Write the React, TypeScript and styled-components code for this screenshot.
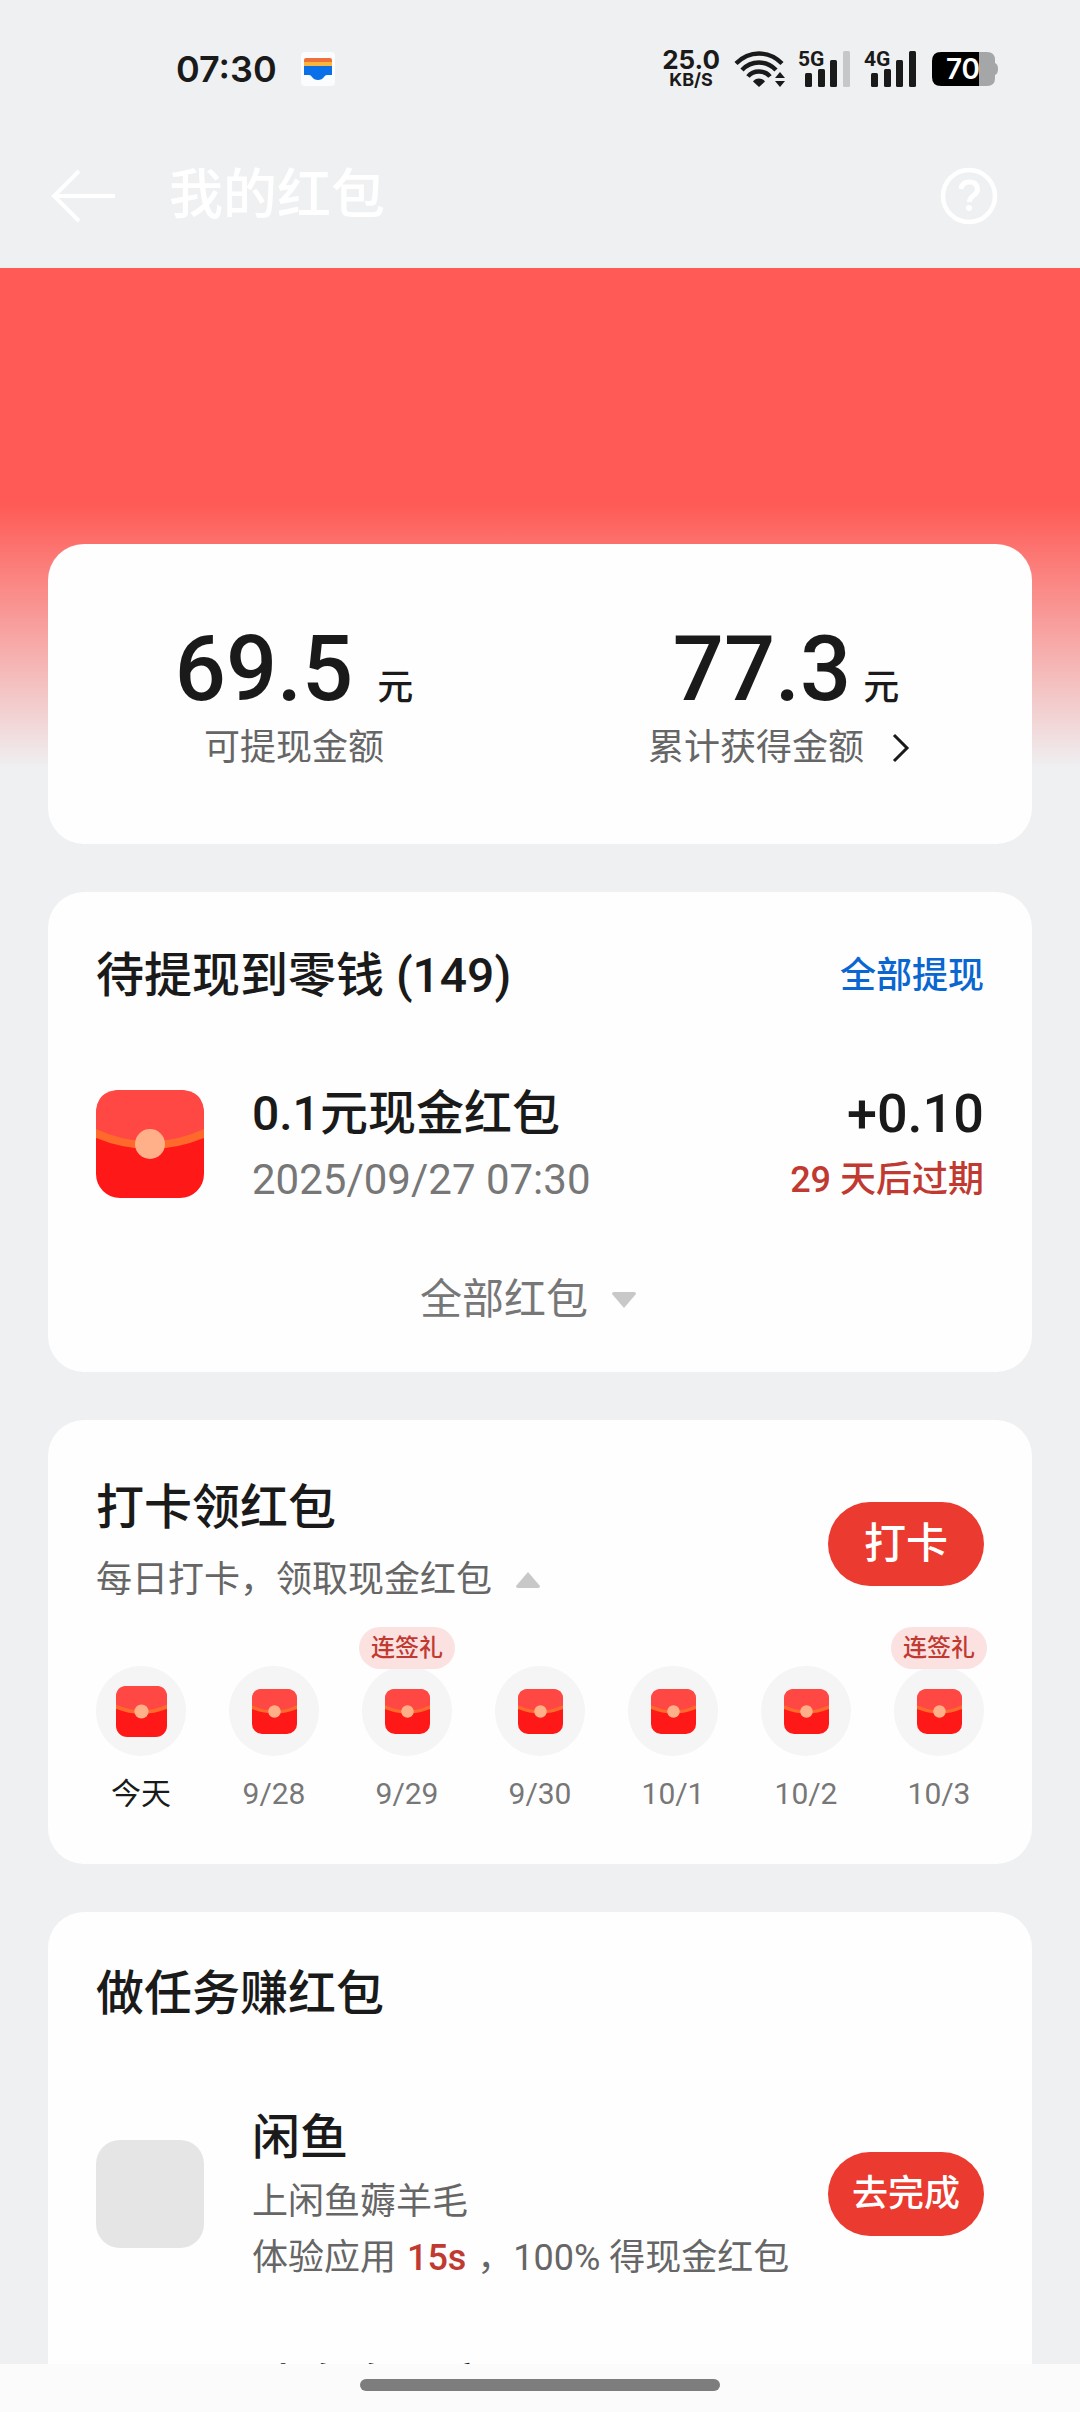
import React from "react";
import styled, { createGlobalStyle, css } from "styled-components";

const sans = `Roboto, "Noto Sans CJK SC", sans-serif`;
const ink = "#1a1a1a";
const muted = "#666666";
const soft = "#777777";
const brand = "#eb3a2f";
const alert = "#c03a31";

const GlobalStyle = createGlobalStyle`
  *, *::before, *::after { box-sizing: border-box; }
  html, body { margin: 0; height: 100%; }
  #root { height: 100%; }
  body {
    background: #eff0f2;
    color: ${ink};
    font-family: ${sans};
    overflow: hidden;
  }
  h1, h2, h3, p, ul { margin: 0; padding: 0; }
  ul { list-style: none; }
  button { border: 0; padding: 0; background: none; font-family: inherit; color: inherit; cursor: pointer; }
  svg { display: block; flex: none; overflow: visible; }
`;

const Screen = styled.div`
  display: flex;
  flex-direction: column;
  height: 100vh;
  overflow: hidden;
`;

const StatusBar = styled.div`
  display: flex;
  align-items: center;
  justify-content: space-between;
  flex: none;
  height: 124px;
  padding: 14px 82px 0 176px;
`;

const StatusGroup = styled.div<{ $gap: number }>`
  display: flex;
  align-items: center;
  gap: ${(p) => p.$gap}px;
`;

const Clock = styled.time`
  font: 600 36px/40px Inter, ${sans};
`;

const NetSpeed = styled.div`
  display: flex;
  flex-direction: column;
  align-items: center;
  font-family: Inter, ${sans};
  font-weight: 700;
`;

const SpeedValue = styled.span`
  font-size: 26px;
  line-height: 22px;
`;

const SpeedUnit = styled.span`
  font-size: 18px;
  line-height: 18px;
`;

const AppBar = styled.header`
  display: flex;
  align-items: center;
  flex: none;
  height: 144px;
  padding: 0 81px 0 48px;
  color: #ffffff;
`;

const IconButton = styled.button`
  display: flex;
  align-items: center;
  justify-content: center;
`;

const PageTitle = styled.h1`
  flex: 1;
  padding-left: 46px;
  font-size: 54px;
  line-height: 72px;
  font-weight: 500;
`;

const Content = styled.main`
  display: flex;
  flex-direction: column;
  flex: 1;
  gap: 48px;
  min-height: 0;
  overflow: hidden;
  padding: 276px 48px 0;
  background: linear-gradient(#ff5a55 0, #ff5a55 236px, #eff0f2 500px);
`;

const Card = styled.section`
  flex: none;
  border-radius: 36px;
  background: #fefefe;
`;

const BalanceCard = styled(Card)`
  display: grid;
  grid-template-columns: 1fr 1fr;
  padding: 72px 0;
`;

const PendingCard = styled(Card)`
  padding: 48px 48px 42px;
`;

const CheckInCard = styled(Card)`
  padding: 52px 48px 46px;
`;

const TaskCard = styled(Card)`
  padding: 46px 48px;
`;

const Balance = styled.div`
  display: flex;
  flex-direction: column;
  align-items: center;
`;

const Amount = styled.p<{ $gap: number }>`
  display: flex;
  align-items: baseline;
  gap: ${(p) => p.$gap}px;
  font-size: 90px;
  line-height: 108px;
  font-weight: 500;
`;

const Unit = styled.span`
  font-size: 36px;
  line-height: 48px;
`;

const labelText = css`
  font-size: 36px;
  line-height: 48px;
  color: ${muted};
`;

const BalanceLabel = styled.p`
  ${labelText}
`;

const BalanceLink = styled.button`
  display: flex;
  align-items: center;
  gap: 12px;
  ${labelText}
`;

const CardHeader = styled.div`
  display: flex;
  align-items: center;
  justify-content: space-between;
`;

const CardTitle = styled.h2`
  font-size: 48px;
  line-height: 72px;
  font-weight: 500;
`;

const TextButton = styled.button`
  font-size: 36px;
  line-height: 48px;
  font-weight: 500;
  color: #0a66d0;
`;

const Row = styled.div<{ $top: number }>`
  display: flex;
  align-items: center;
  gap: 48px;
  padding-top: ${(p) => p.$top}px;
`;

const RowText = styled.div<{ $end?: boolean }>`
  display: flex;
  flex-direction: column;
  flex: ${(p) => (p.$end ? "none" : "1")};
  align-items: ${(p) => (p.$end ? "flex-end" : "flex-start")};
  min-width: 0;
  white-space: nowrap;
`;

const TaskText = styled(RowText)`
  min-height: 184px;
`;

const RowTitle = styled.h3`
  font-size: 48px;
  line-height: 72px;
  font-weight: 500;
`;

const RowDate = styled.p`
  font-size: 42px;
  line-height: 60px;
  color: ${soft};
`;

const Gain = styled.p`
  font-size: 54px;
  line-height: 72px;
  font-weight: 500;
`;

const Expiry = styled.p`
  font-size: 36px;
  line-height: 60px;
  font-weight: 500;
  color: ${alert};
`;

const ExpandButton = styled.button`
  display: flex;
  align-items: center;
  gap: 24px;
  margin: 60px auto 0;
  padding-right: 24px;
  font-size: 42px;
  line-height: 60px;
  color: ${soft};
`;

const FoldButton = styled.button`
  display: flex;
  align-items: center;
  gap: 24px;
  ${labelText}
  line-height: 72px;
`;

const PillButton = styled.button<{ $size: number }>`
  flex: none;
  width: 156px;
  height: 84px;
  border-radius: 42px;
  background: ${brand};
  color: #ffffff;
  font-size: ${(p) => p.$size}px;
  line-height: 60px;
  font-weight: 500;
`;

const Days = styled.ul`
  display: flex;
  justify-content: space-between;
  padding-top: 50px;
`;

const Day = styled.li`
  position: relative;
  display: flex;
  flex-direction: column;
  align-items: center;
  gap: 14px;
  width: 90px;
`;

const DayDisc = styled.div`
  display: flex;
  align-items: center;
  justify-content: center;
  width: 90px;
  height: 90px;
  border-radius: 50%;
  background: #f5f5f5;
`;

const DayLabel = styled.span<{ $today: boolean }>`
  font-size: 30px;
  line-height: 48px;
  white-space: nowrap;
  color: ${(p) => (p.$today ? ink : soft)};
`;

const Bonus = styled.span`
  position: absolute;
  top: -39px;
  left: -3px;
  width: 96px;
  height: 42px;
  border-radius: 21px;
  background: #fce1e1;
  color: ${alert};
  font-size: 24px;
  line-height: 42px;
  font-weight: 500;
  text-align: center;
`;

const TaskIcon = styled.div`
  flex: none;
  width: 108px;
  height: 108px;
  border-radius: 24px;
  background: #e5e5e5;
`;

const TaskNote = styled.p`
  font-size: 36px;
  line-height: 56px;
  color: ${muted};
`;

const Seconds = styled.em`
  margin: 0 2px;
  font-style: normal;
  font-weight: 500;
  color: ${alert};
`;

const HomeBar = styled.footer`
  display: flex;
  justify-content: center;
  flex: none;
  height: 48px;
  padding-top: 15px;
  background: #fbfbfb;
`;

const HomeHandle = styled.div`
  width: 33.3%;
  height: 12px;
  border-radius: 6px;
  background: #7d7d7d;
`;

function WalletIcon() {
  return (
    <svg width="34" height="34" viewBox="0 0 34 34" aria-hidden="true">
      <rect width="34" height="34" rx="4" fill="#fbfcfe" />
      <path d="M3 9V8q0-2 2-2h24q2 0 2 2v2H3z" fill="#f0703c" />
      <path d="M3 10h28v5H3z" fill="#fbb53c" />
      <path d="M3 14h28v9h-5q-2 0-3 2-2 3-6 3t-6-3q-1-2-3-2H3z" fill="#0b6fe8" />
    </svg>
  );
}

function WifiIcon() {
  return (
    <svg width="52" height="38" viewBox="0 0 52 38" aria-hidden="true">
      <g fill="none" stroke={ink} strokeWidth="4.4">
        <path d="M2 13.5Q12 3.5 25 3.5t23 10" />
        <path d="M8 20Q15 12.5 25 12.5T42 20" />
        <path d="M14 26.5q4-5 11-5t11 5" />
      </g>
      <path d="M25 37l-6-5.5q2-3 6-3t6 3z" fill={ink} />
      <path d="M46 22l5 6H41zM46 37l5-6H41z" fill={ink} />
    </svg>
  );
}

function SignalIcon({ label, weak }: { label: string; weak?: boolean }) {
  return (
    <svg width="52" height="38" viewBox="0 0 52 38" role="img" aria-label={label}>
      <text x="-2" y="16" fontFamily="Roboto, sans-serif" fontSize="21" fontWeight="700" fill={ink}>
        {label}
      </text>
      <g fill={ink}>
        <rect x="5" y="23" width="7" height="14" rx="1.5" />
        <rect x="18" y="19" width="7" height="18" rx="1.5" />
        <rect x="30" y="10" width="7" height="27" rx="1.5" />
        <rect x="43" y="1" width="7" height="36" rx="1.5" fill={weak ? "#c6c7c9" : ink} />
      </g>
    </svg>
  );
}

function BatteryIcon() {
  return (
    <svg width="66" height="36" viewBox="0 0 66 36" role="img" aria-label="70">
      <path d="M46 1h9q8 0 8 8v3q3 1 3 6t-3 6v3q0 8-8 8h-9z" fill="#a5a6a8" />
      <path d="M47 1v34H9q-9 0-9-9V10q0-9 9-9z" fill="#000" />
      <text x="31" y="28" textAnchor="middle" fontFamily="Inter, sans-serif" fontSize="28" fontWeight="600" fill="#fff">
        70
      </text>
    </svg>
  );
}

function BackIcon() {
  return (
    <svg width="75" height="60" viewBox="0 0 75 60" fill="none" stroke="currentColor" strokeWidth="4" aria-hidden="true">
      <path d="M31 5L6 30l25 25M6 30h61" />
    </svg>
  );
}

function HelpIcon() {
  return (
    <svg width="60" height="60" viewBox="0 0 60 60" fill="none" stroke="currentColor" strokeWidth="4.5" aria-hidden="true">
      <circle cx="30" cy="30" r="26" />
      <path d="M22 23q1-7 8.500-7t8 7q0 4-4 6.500t-4 6.500" strokeWidth="5" />
      <circle cx="30" cy="42" r="3" fill="currentColor" stroke="none" />
    </svg>
  );
}

function ChevronIcon() {
  return (
    <svg width="48" height="48" viewBox="0 0 48 48" fill="none" stroke={ink} strokeWidth="3" aria-hidden="true">
      <path d="M18 11l13 13-13 13" />
    </svg>
  );
}

function TriangleIcon({ up }: { up?: boolean }) {
  return (
    <svg width="24" height="16" viewBox="0 0 24 16" fill="#c8c8c8" aria-hidden="true">
      <path d={up ? "M12 0l12 14q0 2-2 2H2q-2 0-2-2z" : "M12 16L0 2q0-2 2-2h20q2 0 2 2z"} />
    </svg>
  );
}

function Envelope({ size }: { size: number }) {
  return (
    <svg width={size} height={size} viewBox="0 0 108 108" aria-hidden="true">
      <rect width="108" height="108" rx="24" fill="#ff1818" />
      <path d="M0 38H108V48Q54 70 0 48z" fill="#ff6a2c" />
      <path d="M0 24Q0 0 24 0h60q24 0 24 24v15Q54 64 0 39z" fill="#ff4744" />
      <circle cx="54" cy="54" r="15" fill="#ffb088" />
    </svg>
  );
}

const days = [
  { label: "今天", today: true },
  { label: "9/28" },
  { label: "9/29", bonus: true },
  { label: "9/30" },
  { label: "10/1" },
  { label: "10/2" },
  { label: "10/3", bonus: true },
];

export default function App() {
  return (
    <>
      <GlobalStyle />
      <Screen>
        <StatusBar>
          <StatusGroup $gap={24}>
            <Clock>07:30</Clock>
            <WalletIcon />
          </StatusGroup>
          <StatusGroup $gap={14}>
            <NetSpeed>
              <SpeedValue>25.0</SpeedValue>
              <SpeedUnit>KB/S</SpeedUnit>
            </NetSpeed>
            <WifiIcon />
            <SignalIcon label="5G" weak />
            <SignalIcon label="4G" />
            <BatteryIcon />
          </StatusGroup>
        </StatusBar>
        <AppBar>
          <IconButton aria-label="返回">
            <BackIcon />
          </IconButton>
          <PageTitle>我的红包</PageTitle>
          <IconButton aria-label="帮助">
            <HelpIcon />
          </IconButton>
        </AppBar>
        <Content>
          <BalanceCard>
            <Balance>
              <Amount $gap={24}>
                69.5<Unit>元</Unit>
              </Amount>
              <BalanceLabel>可提现金额</BalanceLabel>
            </Balance>
            <Balance>
              <Amount $gap={12}>
                77.3<Unit>元</Unit>
              </Amount>
              <BalanceLink>
                累计获得金额
                <ChevronIcon />
              </BalanceLink>
            </Balance>
          </BalanceCard>

          <PendingCard>
            <CardHeader>
              <CardTitle>待提现到零钱 (149)</CardTitle>
              <TextButton>全部提现</TextButton>
            </CardHeader>
            <Row $top={66}>
              <Envelope size={108} />
              <RowText>
                <RowTitle>0.1元现金红包</RowTitle>
                <RowDate>2025/09/27 07:30</RowDate>
              </RowText>
              <RowText $end>
                <Gain>+0.10</Gain>
                <Expiry>29 天后过期</Expiry>
              </RowText>
            </Row>
            <ExpandButton>
              全部红包
              <TriangleIcon />
            </ExpandButton>
          </PendingCard>

          <CheckInCard>
            <CardHeader>
              <div>
                <CardTitle>打卡领红包</CardTitle>
                <FoldButton>
                  每日打卡，领取现金红包
                  <TriangleIcon up />
                </FoldButton>
              </div>
              <PillButton $size={42}>打卡</PillButton>
            </CardHeader>
            <Days>
              {days.map((day) => (
                <Day key={day.label}>
                  <DayDisc>
                    <Envelope size={day.today ? 51 : 45} />
                  </DayDisc>
                  <DayLabel $today={!!day.today}>{day.label}</DayLabel>
                  {day.bonus && <Bonus>连签礼</Bonus>}
                </Day>
              ))}
            </Days>
          </CheckInCard>

          <TaskCard>
            <CardTitle>做任务赚红包</CardTitle>
            <Row $top={72}>
              <TaskIcon />
              <TaskText>
                <RowTitle>闲鱼</RowTitle>
                <TaskNote>上闲鱼薅羊毛</TaskNote>
                <TaskNote>
                  体验应用 <Seconds>15s</Seconds> ，100% 得现金红包
                </TaskNote>
              </TaskText>
              <PillButton $size={36}>去完成</PillButton>
            </Row>
            <Row $top={66}>
              <TaskIcon />
              <TaskText>
                <RowTitle>读多多分享</RowTitle>
              </TaskText>
            </Row>
          </TaskCard>
        </Content>
        <HomeBar>
          <HomeHandle />
        </HomeBar>
      </Screen>
    </>
  );
}
